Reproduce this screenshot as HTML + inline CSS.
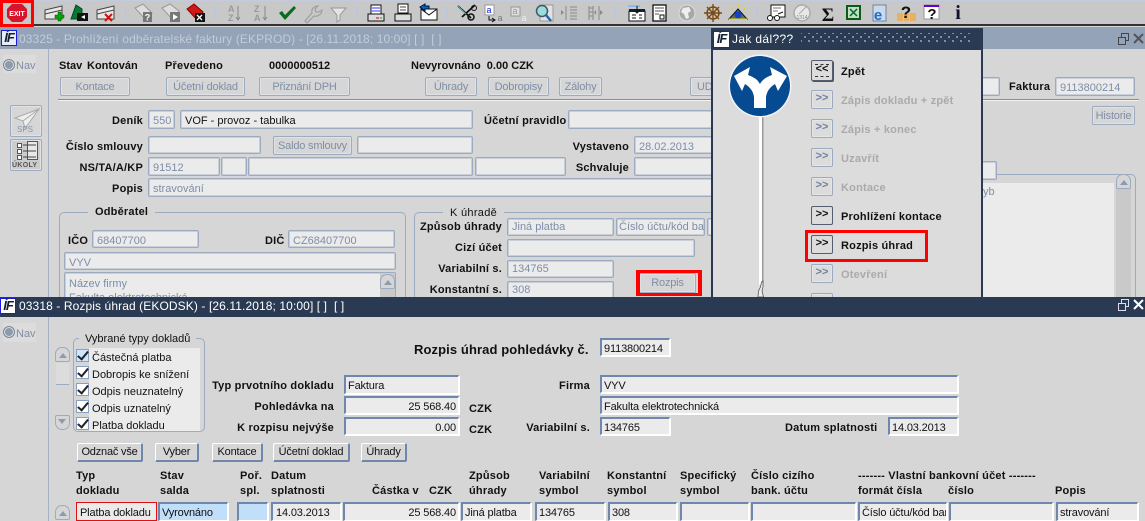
<!DOCTYPE html>
<html lang="cs"><head><meta charset="utf-8"><title>IFS</title>
<style>
html,body{margin:0;padding:0;background:#d6d6d6}
body{width:1145px;height:521px;overflow:hidden;position:relative;font:11px/14px "Liberation Sans",Arial,sans-serif;letter-spacing:0;color:#000}
div,i,b,u,span.a{position:absolute;display:block;box-sizing:border-box;font-style:normal;white-space:nowrap}
b{font-weight:bold;letter-spacing:.2px;color:#111}
.r{text-align:right}
.win{left:0;width:1145px;overflow:hidden;background:#d6d6d6}
.f{background:#ebebeb;border:1px solid #9dabc0;box-shadow:inset 0 0 0 1px #c9cfd8;border-radius:2px;color:#7e8ea8;padding:3px 0 0 4px;overflow:hidden}
.g{background:#ebebeb;border-style:solid;border-width:2px 1px 1px 2px;border-color:#6f86ad #fff #fff #6f86ad;color:#111;padding:2px 0 0 2px;overflow:hidden;line-height:15px;box-shadow:1px 1px 0 #fff;letter-spacing:-.15px}
.bt{border:1px solid #9dabc0;box-shadow:inset 0 0 0 1px #dfe2e6;border-radius:2px;color:#7e8ea8;text-align:center;line-height:19px;background:#d6d6d6;letter-spacing:-.2px}
.bk{border-style:solid;border-width:1px 2px 2px 1px;border-color:#fff #6f86ad #6f86ad #fff;border-radius:2px;color:#111;text-align:center;line-height:17px;background:#d6d6d6;letter-spacing:-.2px}
.ttl{left:0;width:1145px;height:21px;font-size:12px;line-height:21px;padding-left:19px;letter-spacing:.1px}
.logo{background:#fff;border:1px solid #1a1ae0;color:#123;font:italic bold 13px/14px "Liberation Sans",sans-serif;letter-spacing:-1px;text-align:center}
.gb{border:1px solid #9dabc0;border-radius:5px}
.lg{background:#d6d6d6;padding:0 7px}
.sb{width:15px;background:#c9c9c9}
.su{width:15px;height:15px;border:1px solid #9dabc0;border-radius:7px 7px 2px 2px;background:#d6d6d6}
.su:after{content:"";position:absolute;left:3px;top:5px;border:4px solid transparent;border-top:0;border-bottom:5px solid #8d9bb0}
.db{left:811px;width:22px;height:19px;border:1px solid #9dabc0;box-shadow:inset 0 0 0 1px #e6e6e6;border-radius:2px;color:#6f80a0;font:bold 11px/15px "Liberation Sans",sans-serif;text-align:center;background:#dcdcdc}
.da{color:#111;border:1px solid #555d70;box-shadow:none}
.dl{left:841px;font:bold 11px/14px "Liberation Sans",sans-serif;letter-spacing:.2px;color:#111}
.dis{color:#aaa}
.ck{left:76px;width:13px;height:13px;background:#fff;border:1px solid #8aa0c0}
.ck:after{content:"";position:absolute;left:3px;top:-1px;width:4px;height:9px;border:solid #222;border-width:0 2px 2px 0;transform:rotate(40deg)}
.rad{width:12px;height:12px;border-radius:6px;background:#8f9aa8;border:1px solid #7b8798;box-shadow:0 0 0 1px #dfe3e8 inset}
.red{border:3px solid #f00}
</style></head><body>

<!-- toolbar -->
<div style="left:0;top:0;width:1145px;height:26px;background:#c8c8c8;border-top:1px solid #c3cbdc;border-bottom:2px solid #333"></div>
<svg style="position:absolute;left:0;top:0" width="1145" height="26" viewBox="0 0 1145 26">
<g fill="#b9c6dc"><rect x="35" y="6" width="1.5" height="13"/><rect x="125" y="6" width="1.5" height="13"/><rect x="214" y="6" width="1.5" height="13"/><rect x="356" y="6" width="1.5" height="13"/><rect x="446" y="6" width="1.5" height="13"/><rect x="614" y="6" width="1.5" height="13"/><rect x="756" y="6" width="1.5" height="13"/></g>
<path d="M12 4h10l5 5v8l-5 5H12l-5-5V9z" fill="#d8142c"/>
<text x="17" y="16" font-family="Liberation Sans" font-size="7" font-weight="bold" fill="#fff" text-anchor="middle">EXIT</text>
<g stroke="#444" fill="#e8e8e8"><path d="M45 10l17-4v13H45z"/><path d="M45 14l17-4" fill="none"/></g><path d="M55 15h3v-3h3v3h3v3h-3v3h-3v-3h-3z" fill="#0a0" stroke="#050" stroke-width=".5"/>
<path d="M71 19l5-14 6 4v10z" fill="#0a7a2a" stroke="#043"/><rect x="77" y="13" width="11" height="8" fill="#111"/><path d="M85 15v4l-4-2z" fill="#fff"/>
<g stroke="#444" fill="#e8e8e8"><path d="M97 10l17-4v13H97z"/><path d="M97 14l17-4" fill="none"/></g><path d="M105 14l7 7m0-7l-7 7" stroke="#d01010" stroke-width="2"/>
<path d="M135 8l8-4 9 9-6 7z" fill="#ddd" stroke="#999"/><rect x="143" y="12" width="9" height="10" fill="#777"/><text x="147.500" y="20.500" font-family="Liberation Sans" font-size="9" font-weight="bold" fill="#fff" text-anchor="middle">?</text>
<path d="M162 8l8-4 9 7-6 9z" fill="#ddd" stroke="#999"/><rect x="170" y="12" width="10" height="10" fill="#777"/><path d="M173 14v6l5-3z" fill="#fff"/>
<path d="M187 9l7-5 9 8-6 8z" fill="#d01818" stroke="#800"/><rect x="195" y="13" width="10" height="9" fill="#111"/><path d="M197 15l5 5m0-5l-5 5" stroke="#fff" stroke-width="1.300"/>
<g font-family="Liberation Sans" font-size="9" font-weight="bold" fill="#999"><text x="228" y="12">A</text><text x="228" y="21">Z</text><text x="254" y="12">Z</text><text x="254" y="21">A</text></g>
<path d="M238 6v14m-2-3l2 3 2-3M265 6v14m-2-3l2 3 2-3" stroke="#888" fill="none"/>
<path d="M279 13l3-2 3 4 9-9 2 2-11 12z" fill="#0a6a20"/>
<path d="M305 21l7-8c-1-4 2-7 6-7l-3 3 1 3 3 0 3-2c0 4-4 7-8 6l-7 7z" fill="none" stroke="#999"/>
<path d="M331 8h15l-6 7v5l-3 2v-7z" fill="#e4e4e4" stroke="#999"/>
<rect x="371" y="5" width="10" height="9" fill="#fff" stroke="#111"/><path d="M372 8h8M372 11h8" stroke="#33f"/><rect x="368" y="14" width="16" height="7" fill="#ddd" stroke="#111"/><path d="M376 18h3" stroke="#c00"/><path d="M380 18h2" stroke="#0a0"/>
<rect x="398" y="4" width="10" height="9" fill="#fff" stroke="#111"/><rect x="395" y="14" width="16" height="7" fill="#ddd" stroke="#111"/><path d="M400 7h6M400 10h6" stroke="#444"/>
<rect x="421" y="9" width="16" height="11" fill="#fff" stroke="#111"/><path d="M421 9l8 6 8-6" fill="none" stroke="#111"/><path d="M420 7l5-3v2h4v3h-4v2z" fill="#06c" stroke="#013"/>
<path d="M458 6l13 12M475 5l-13 12" stroke="#111" stroke-width="1.800"/><circle cx="471" cy="17" r="3" fill="none" stroke="#111" stroke-width="1.500"/><circle cx="474" cy="8" r="2.500" fill="none" stroke="#111"/><path d="M458 6l8 8" stroke="#6aa"/>
<rect x="485" y="5" width="9" height="10" fill="#fff" stroke="#999"/><text x="489" y="13" font-family="Liberation Sans" font-size="9" fill="#12d" text-anchor="middle">a</text><path d="M489 16v4h5m-2-2l3 2-3 2" stroke="#111" fill="none"/><text x="500" y="21" font-family="Liberation Sans" font-size="9" fill="#777" text-anchor="middle">a</text>
<rect x="511" y="7" width="9" height="9" fill="#ddd" stroke="#999"/><text x="515" y="14" font-family="Liberation Sans" font-size="9" fill="#999" text-anchor="middle">a</text><text x="524" y="21" font-family="Liberation Sans" font-size="9" fill="#eee" text-anchor="middle">a</text>
<rect x="540" y="5" width="13" height="16" fill="#e2e2e2" stroke="#999"/><circle cx="542" cy="11" r="5.500" fill="#9dd" stroke="#456" stroke-width="1.500"/><path d="M546 15l5 6" stroke="#26b" stroke-width="2.500"/>
<path d="M566 6v14M570 7h7M570 10h7M570 13h7M570 16h7M570 19h7" stroke="#888" fill="none"/><path d="M561 10v5l3-2.500z" fill="#888"/>
<path d="M589 6v14M593 6v14M599 6v14M589 8h4M589 12h4M589 16h4M603 8h0" stroke="#888" fill="none"/><path d="M596 10v5l-2-2.500zM600 10v5l3-2.500z" fill="#888"/>
<rect x="628" y="5" width="12" height="2" fill="#8be"/><rect x="629" y="11" width="16" height="10" fill="#fff" stroke="#111"/><rect x="629" y="9" width="16" height="3" fill="#123"/><path d="M637 6v6m-3-2l3 3 3-3" stroke="#111" fill="none"/><path d="M632 15h4M632 18h4M639 15h3M639 18h3" stroke="#111"/>
<rect x="653" y="5" width="13" height="16" fill="#fff" stroke="#111" stroke-width="1.300"/><path d="M655 8h9M655 11h9M655 14h4" stroke="#555"/><rect x="660" y="15" width="4" height="4" fill="none" stroke="#111"/>
<circle cx="687" cy="13" r="8" fill="#a8a8a8" stroke="#ddd"/><path d="M683 8l6-1 2 4-3 2 1 5-3 1-2-5-3-2z" fill="#eee"/>
<circle cx="713" cy="13" r="6" fill="none" stroke="#7a4a14" stroke-width="1.500"/><path d="M704 13h18M713 4v18M707 7l12 12M719 7l-12 12" stroke="#7a4a14" stroke-width="1.400"/>
<path d="M729 19l9-10 9 10z" fill="#666" stroke="#111"/><circle cx="738" cy="15" r="3.500" fill="#14c"/><path d="M731 8l2 2M738 4v3M745 8l-2 2" stroke="#dd0"/><path d="M729 19h18" stroke="#dd0"/>
<rect x="771" y="5" width="14" height="12" fill="#fff" stroke="#111"/><path d="M773 8h8M773 11h5" stroke="#777"/><circle cx="770" cy="18" r="2.500" fill="#fff" stroke="#111"/><circle cx="777" cy="18" r="2.500" fill="#fff" stroke="#111"/><path d="M778 14l5-2" stroke="#111"/>
<circle cx="802" cy="13" r="8" fill="#e8e8e8" stroke="#aaa" stroke-width="1.500"/><path d="M799 14l7-7" stroke="#aaa"/><text x="802" y="19" font-family="Liberation Sans" font-size="5" fill="#888" text-anchor="middle">1314</text>
<text x="828" y="21" font-family="Liberation Serif" font-size="19" font-weight="bold" fill="#111" text-anchor="middle">Σ</text>
<rect x="846" y="5" width="15" height="15" fill="#0a5a1a"/><rect x="848" y="7" width="11" height="11" fill="#bfe0bf"/><path d="M850 9l7 7m0-7l-7 7" stroke="#063" stroke-width="1.500"/>
<rect x="873" y="5" width="13" height="16" fill="#cdd8ea" stroke="#68a"/><text x="878" y="20" font-family="Liberation Sans" font-size="15" font-weight="bold" fill="#1a70d0" text-anchor="middle">e</text>
<rect x="897" y="13" width="6" height="8" fill="#e8b060"/><rect x="904" y="13" width="5" height="8" fill="#e8b060"/><rect x="910" y="13" width="6" height="8" fill="#e8b060"/><text x="906" y="18" font-family="Liberation Sans" font-size="17" font-weight="bold" fill="#111" text-anchor="middle">?</text>
<rect x="924" y="5" width="15" height="14" fill="#fff" stroke="#999"/><rect x="924" y="5" width="15" height="2" fill="#60c"/><text x="932" y="19" font-family="Liberation Sans" font-size="15" font-weight="bold" fill="#111" text-anchor="middle">?</text>
<text x="958" y="19" font-family="Liberation Serif" font-size="20" font-weight="bold" fill="#113" text-anchor="middle">i</text>
</svg>
<div class="red" style="left:0;top:0;width:34px;height:27px"></div>

<!-- top window -->
<div class="win" style="top:27px;height:270px">
<div style="left:0;top:0;width:1145px;height:22px;background:#94a3b8"></div>
<div class="logo" style="left:1px;top:3px;width:16px;height:16px;background:#e8ecf8">ÍF</div>
<div class="ttl" style="top:2px;color:#c3ccd9">03325 - Prohlížení odběratelské faktury (EKPROD) - [26.11.2018; 10:00] [ ]&nbsp; [ ]</div>
<svg style="position:absolute;left:1116px;top:5px" width="28" height="14"><path d="M2.500 5.500h7v7h-7zM5.500 5V1.500h7v7H10" fill="none" stroke="#444"/><path d="M18 2l9 9m0-9l-9 9" stroke="#555" stroke-width="2"/></svg>
<div style="left:48px;top:22px;width:1px;height:248px;background:#a4b0c4"></div>
</div>
<div class="win" style="top:49px;height:248px;background:none">
<div style="left:3px;top:6px;width:33px;height:18px;background:#dcdcdc"></div>
<div class="rad" style="left:3px;top:10px;background:#8f9aa8"></div>
<span class="a" style="left:16px;top:10px;color:#7e8ea8;font-size:11px">Nav</span>

<b style="left:59px;top:10px;letter-spacing:0">Stav</b>
<b style="left:87px;top:10px;letter-spacing:0">Kontován</b>
<b style="left:165px;top:10px">Převedeno</b>
<b style="left:269px;top:10px;letter-spacing:0">0000000512</b>
<b style="left:411px;top:10px;letter-spacing:0">Nevyrovnáno&nbsp; 0.00 CZK</b>
<div class="bt" style="left:60px;top:28px;width:70px;height:19px">Kontace</div>
<div class="bt" style="left:166px;top:28px;width:79px;height:19px">Účetní doklad</div>
<div class="bt" style="left:259px;top:28px;width:91px;height:19px">Přiznání DPH</div>
<div class="bt" style="left:425px;top:28px;width:52px;height:19px">Úhrady</div>
<div class="bt" style="left:488px;top:28px;width:61px;height:19px">Dobropisy</div>
<div class="bt" style="left:559px;top:28px;width:43px;height:19px">Zálohy</div>
<div class="bt" style="left:690px;top:28px;width:40px;height:19px;text-align:left;padding-left:6px">UD</div>
<div style="left:58px;top:50px;width:1081px;height:1px;background:#8b8b8b"></div>
<div style="left:58px;top:51px;width:1081px;height:1px;background:#f2f2f2"></div>

<div class="bt" style="left:10px;top:56px;width:32px;height:32px"></div>
<svg style="position:absolute;left:11px;top:57px" width="30" height="30"><path d="M28 3L4 12l8 3 2 7 4-5z" fill="#eee" stroke="#aaa"/><path d="M12 15l16-12" stroke="#aaa"/></svg>
<span class="a" style="left:17px;top:74px;font-size:8px;color:#8896aa;letter-spacing:0">SPS</span>
<div class="bt" style="left:10px;top:90px;width:32px;height:32px;background:#ccc"></div>
<svg style="position:absolute;left:12px;top:92px" width="28" height="20"><g fill="#fff" stroke="#555"><rect x="5.500" y="2.500" width="4" height="4"/><rect x="5.500" y="8.500" width="4" height="4"/><rect x="5.500" y="14.500" width="4" height="4"/><rect x="15.500" y=".5" width="10" height="18" fill="#e8e8e8"/></g><path d="M11 4h13M11 10h13M11 16h13" stroke="#444"/></svg>
<span class="a" style="left:12px;top:112px;font:bold 7px/10px 'Liberation Sans';color:#555;letter-spacing:.3px">ÚKOLY</span>

<b class="r" style="right:1002px;top:65px">Deník</b>
<div class="f" style="left:148px;top:61px;width:27px;height:19px">550</div>
<div class="f" style="left:180px;top:61px;width:293px;height:19px;color:#111">VOF - provoz - tabulka</div>
<b style="left:484px;top:65px">Účetní pravidlo</b>
<div class="f" style="left:568px;top:61px;width:150px;height:19px"></div>
<b class="r" style="right:1002px;top:91px">Číslo smlouvy</b>
<div class="f" style="left:148px;top:87px;width:113px;height:18px"></div>
<div class="bt" style="left:273px;top:87px;width:79px;height:19px">Saldo smlouvy</div>
<div class="f" style="left:357px;top:87px;width:116px;height:18px"></div>
<b class="r" style="right:516px;top:91px">Vystaveno</b>
<div class="f" style="left:634px;top:87px;width:84px;height:18px">28.02.2013</div>
<b class="r" style="right:1002px;top:112px">NS/TA/A/KP</b>
<div class="f" style="left:148px;top:108px;width:72px;height:19px">91512</div>
<div class="f" style="left:221px;top:108px;width:26px;height:19px"></div>
<div class="f" style="left:248px;top:108px;width:225px;height:19px"></div>
<div class="f" style="left:475px;top:108px;width:91px;height:19px"></div>
<b class="r" style="right:516px;top:112px">Schvaluje</b>
<div class="f" style="left:634px;top:108px;width:84px;height:19px"></div>
<b class="r" style="right:1002px;top:133px">Popis</b>
<div class="f" style="left:148px;top:129px;width:570px;height:19px">stravování</div>

<div class="gb" style="left:59px;top:163px;width:347px;height:100px"></div>
<b class="lg" style="left:88px;top:156px">Odběratel</b>
<b style="left:68px;top:185px">IČO</b>
<div class="f" style="left:92px;top:181px;width:107px;height:18px">68407700</div>
<b style="left:265px;top:185px">DIČ</b>
<div class="f" style="left:288px;top:181px;width:107px;height:18px">CZ68407700</div>
<div class="f" style="left:64px;top:203px;width:332px;height:18px">VYV</div>
<div class="f" style="left:64px;top:223px;width:332px;height:40px;padding-top:4px;line-height:14px">Název firmy<br>Fakulta elektrotechnická</div>
<div class="sb" style="left:380px;top:225px;height:30px"></div>
<div class="su" style="left:380px;top:225px"></div>

<div class="gb" style="left:414px;top:163px;width:320px;height:100px"></div>
<span class="a lg" style="left:443px;top:157px;color:#111;letter-spacing:.3px">K úhradě</span>
<b class="r" style="right:643px;top:171px">Způsob úhrady</b>
<div class="f" style="left:507px;top:169px;width:107px;height:18px;line-height:13px;padding-top:2px">Jiná platba</div>
<div class="f" style="left:616px;top:169px;width:89px;height:18px;line-height:13px;padding:2px 0 0 2px">Číslo účtu/kód bar</div>
<div class="f" style="left:707px;top:169px;width:20px;height:18px"></div>
<b class="r" style="right:643px;top:192px">Cizí účet</b>
<div class="f" style="left:507px;top:190px;width:188px;height:18px"></div>
<b class="r" style="right:643px;top:213px">Variabilní s.</b>
<div class="f" style="left:507px;top:211px;width:107px;height:18px;line-height:13px;padding-top:2px">134765</div>
<b class="r" style="right:643px;top:234px">Konstantní s.</b>
<div class="f" style="left:507px;top:232px;width:107px;height:18px;line-height:13px;padding-top:2px">308</div>
<div class="bt" style="left:639px;top:224px;width:57px;height:20px">Rozpis</div>
<div class="red" style="left:636px;top:221px;width:66px;height:26px;border-width:3px 4px"></div>

<div class="f" style="left:960px;top:28px;width:40px;height:19px"></div>
<b style="left:1009px;top:31px">Faktura</b>
<div class="f" style="left:1055px;top:28px;width:80px;height:19px">9113800214</div>
<div class="bt" style="left:1092px;top:57px;width:43px;height:19px">Historie</div>
<div class="gb" style="left:900px;top:125px;width:236px;height:140px"></div>
<div class="f" style="left:900px;top:112px;width:97px;height:19px"></div>
<div style="left:900px;top:134px;width:214px;height:120px;background:#ebebeb"></div>
<span class="a" style="left:983px;top:136px;color:#7e8ea8">yb</span>
<div class="sb" style="left:1116px;top:137px;height:120px"></div>
<div class="su" style="left:1116px;top:125px"></div>
</div>

<!-- dialog -->
<div style="left:711px;top:28px;width:272px;height:269px;background:#dcdcdc;border-left:2px solid #2a3a52;border-right:2px solid #2a3a52;overflow:hidden">
<div style="left:0;top:0;width:270px;height:22px;background:#2a3a52"></div>
</div>
<div class="logo" style="left:713px;top:31px;width:17px;height:17px">ÍF</div>
<span class="a" style="left:732px;top:30px;color:#fff;font-size:12px;line-height:19px;letter-spacing:.35px">Jak dál???</span>
<div style="left:801px;top:33px;width:171px;height:11px;background-image:radial-gradient(#97a3b3 .8px,transparent 1.1px),radial-gradient(#97a3b3 .8px,transparent 1.100px);background-size:8px 8px;background-position:0 0,4px 4px"></div>
<svg style="position:absolute;left:725px;top:50px" width="70" height="247" viewBox="725 50 70 247">
<rect x="759" y="115" width="4" height="170" fill="#fff"/><rect x="762" y="115" width="1.500" height="170" fill="#999"/>
<path d="M758 297l.5-6 2-4 1-5 1.500-1 0 6-1 4 1.500 6z" fill="#eee" stroke="#555" stroke-width=".8"/>
<circle cx="760" cy="86" r="31.500" fill="#f4f4f4"/><circle cx="760" cy="86" r="30" fill="#064b92"/>
<path d="M754 108V97Q753 89 745 84L742 91 734 76 750 67 748 75Q757 78 760 84 763 78 772 75L770 67 787 76 778 91 775 84Q767 89 766 97V108Z" fill="#fff"/>
</svg>
<div class="db da" style="top:60px;height:21px;box-shadow:1px 1px 0 #555;line-height:17px">&lt;&lt;<div style="left:3px;top:3px;width:14px;height:13px;border:dashed #333;border-width:1px 0"></div></div><span class="a dl" style="top:65px">Zpět</span>
<div class="db" style="top:90px">&gt;&gt;</div><span class="a dl dis" style="top:94px">Zápis dokladu + zpět</span>
<div class="db" style="top:119px">&gt;&gt;</div><span class="a dl dis" style="top:123px">Zápis + konec</span>
<div class="db" style="top:148px">&gt;&gt;</div><span class="a dl dis" style="top:152px">Uzavřít</span>
<div class="db" style="top:177px">&gt;&gt;</div><span class="a dl dis" style="top:181px">Kontace</span>
<div class="db da" style="top:206px">&gt;&gt;</div><span class="a dl" style="top:210px">Prohlížení kontace</span>
<div class="db da" style="top:235px">&gt;&gt;</div><span class="a dl" style="top:239px">Rozpis úhrad</span>
<div class="db" style="top:264px">&gt;&gt;</div><span class="a dl dis" style="top:268px">Otevření</span>
<div class="db" style="top:293px"></div>
<div class="red" style="left:805px;top:230px;width:123px;height:32px"></div>

<!-- bottom window -->
<div class="win" style="top:297px;height:224px">
<div style="left:0;top:0;width:1145px;height:20px;background:#2a3a52"></div>
<div class="logo" style="left:0;top:1px;width:16px;height:16px">ÍF</div>
<div class="ttl" style="top:-1px;height:21px;color:#fff">03318 - Rozpis úhrad (EKODSK) - [26.11.2018; 10:00] [ ]&nbsp; [ ]</div>
<svg style="position:absolute;left:1116px;top:1px" width="28" height="14"><path d="M2.500 5.500h7v7h-7zM5.500 5V1.500h7v7H10" fill="none" stroke="#dde"/><path d="M18 2l9 9m0-9l-9 9" stroke="#fff" stroke-width="2"/></svg>
<div style="left:48px;top:20px;width:1px;height:204px;background:#a4b0c4"></div>
<div style="left:3px;top:26px;width:33px;height:19px;background:#dcdcdc"></div>
<div class="rad" style="left:3px;top:29px"></div>
<span class="a" style="left:16px;top:30px;color:#7e8ea8">Nav</span>

<div class="gb" style="left:73px;top:41px;width:132px;height:94px"></div>
<span class="a lg" style="left:79px;top:35px;color:#111;padding:0 6px">Vybrané typy dokladů</span>
<div style="left:76px;top:51px;width:124px;height:83px;background:#ebebeb"></div>
<div style="left:76px;top:51px;width:13px;height:83px;background:#d6d6d6"></div>
<div class="ck" style="top:52px;background:#cfe6fa"></div><span class="a" style="left:92px;top:54px;color:#111">Částečná platba</span>
<div class="ck" style="top:69px"></div><span class="a" style="left:92px;top:71px;color:#111">Dobropis ke snížení</span>
<div class="ck" style="top:86px"></div><span class="a" style="left:92px;top:88px;color:#111">Odpis neuznatelný</span>
<div class="ck" style="top:103px"></div><span class="a" style="left:92px;top:105px;color:#111">Odpis uznatelný</span>
<div class="ck" style="top:120px"></div><span class="a" style="left:92px;top:122px;color:#111">Platba dokladu</span>
<div class="su" style="left:55px;top:50px"></div>
<div style="left:56px;top:66px;width:13px;height:22px;background:#dcdcdc;border-bottom:1px solid #9dabc0"></div>
<div class="su" style="left:55px;top:118px;transform:rotate(180deg)"></div>

<b style="left:414px;top:45px;font-size:13px;line-height:16px;letter-spacing:.1px">Rozpis úhrad pohledávky č.</b>
<div class="g" style="left:600px;top:41px;width:70px;height:18px">9113800214</div>
<b class="r" style="right:811px;top:82px">Typ prvotního dokladu</b>
<div class="g" style="left:344px;top:78px;width:115px;height:19px">Faktura</div>
<b class="r" style="right:811px;top:103px">Pohledávka na</b>
<div class="g r" style="left:344px;top:99px;width:115px;height:18px;padding-right:2px;padding-left:0">25 568.40</div>
<b class="r" style="right:811px;top:124px">K rozpisu nejvýše</b>
<div class="g r" style="left:344px;top:120px;width:115px;height:18px;padding-right:2px;padding-left:0">0.00</div>
<b style="left:469px;top:105px">CZK</b>
<b style="left:469px;top:126px">CZK</b>
<b class="r" style="right:555px;top:82px">Firma</b>
<div class="g" style="left:600px;top:78px;width:358px;height:18px">VYV</div>
<div class="g" style="left:600px;top:99px;width:358px;height:18px">Fakulta elektrotechnická</div>
<b class="r" style="right:555px;top:124px">Variabilní s.</b>
<div class="g" style="left:600px;top:120px;width:70px;height:18px">134765</div>
<b style="left:785px;top:124px">Datum splatnosti</b>
<div class="g" style="left:888px;top:120px;width:70px;height:18px">14.03.2013</div>

<div class="bk" style="left:77px;top:146px;width:66px;height:19px">Odznač vše</div>
<div class="bk" style="left:155px;top:146px;width:44px;height:19px">Vyber</div>
<div class="bk" style="left:212px;top:146px;width:51px;height:19px">Kontace</div>
<div class="bk" style="left:273px;top:146px;width:77px;height:19px">Účetní doklad</div>
<div class="bk" style="left:361px;top:146px;width:46px;height:19px">Úhrady</div>

<b style="left:76px;top:172px;line-height:15px">Typ<br>dokladu</b>
<b style="left:160px;top:172px;line-height:15px">Stav<br>salda</b>
<b style="left:240px;top:172px;line-height:15px">Poř.<br>spl.</b>
<b style="left:271px;top:172px;line-height:15px">Datum<br>splatnosti</b>
<b style="left:372px;top:187px;line-height:15px">Částka v</b>
<b style="left:429px;top:187px;line-height:15px">CZK</b>
<b style="left:469px;top:172px;line-height:15px">Způsob<br>úhrady</b>
<b style="left:539px;top:172px;line-height:15px">Variabilní<br>symbol</b>
<b style="left:607px;top:172px;line-height:15px">Konstantní<br>symbol</b>
<b style="left:680px;top:172px;line-height:15px">Specifický<br>symbol</b>
<b style="left:751px;top:172px;line-height:15px">Číslo cizího<br>bank. účtu</b>
<b style="left:858px;top:172px;line-height:15px">------- Vlastní bankovní účet -------</b>
<b style="left:858px;top:187px;line-height:15px">formát čísla</b>
<b style="left:948px;top:187px;line-height:15px">číslo</b>
<b style="left:1055px;top:187px;line-height:15px">Popis</b>

<div class="su" style="left:55px;top:208px"></div>
<div class="g" style="left:76px;top:205px;width:81px;height:19px;border:1px solid #e01010;box-shadow:none;padding:3px 0 0 3px">Platba dokladu</div>
<div class="g" style="left:158px;top:205px;width:70px;height:19px;background:#c2dffa">Vyrovnáno</div>
<div class="g" style="left:237px;top:205px;width:31px;height:19px;background:#c2dffa"></div>
<div class="g" style="left:271px;top:205px;width:70px;height:19px;padding-left:3px">14.03.2013</div>
<div class="g r" style="left:343px;top:205px;width:116px;height:19px;padding-right:2px;padding-left:0">25 568.40</div>
<div class="g" style="left:461px;top:205px;width:70px;height:19px">Jiná platba</div>
<div class="g" style="left:535px;top:205px;width:70px;height:19px">134765</div>
<div class="g" style="left:608px;top:205px;width:69px;height:19px">308</div>
<div class="g" style="left:680px;top:205px;width:69px;height:19px"></div>
<div class="g" style="left:751px;top:205px;width:105px;height:19px"></div>
<div class="g" style="left:858px;top:205px;width:89px;height:19px">Číslo účtu/kód bar</div>
<div class="g" style="left:949px;top:205px;width:104px;height:19px"></div>
<div class="g" style="left:1056px;top:205px;width:82px;height:19px">stravování</div>
</div>
</body></html>
